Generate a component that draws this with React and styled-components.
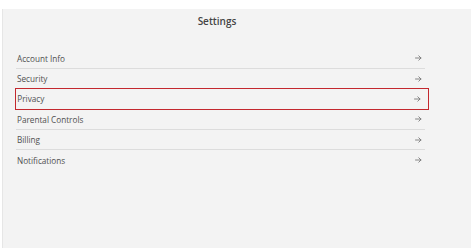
import React from 'react';
import styled, { createGlobalStyle } from 'styled-components';

const GlobalStyle = createGlobalStyle`
  html, body {
    margin: 0;
    padding: 0;
    background: #ffffff;
    font-family: "Open Sans", "Liberation Sans", sans-serif;
  }
`;

const items = [
    'Account Info',
    'Security',
    'Privacy',
    'Parental Controls',
    'Billing',
    'Notifications',
];

const Arrow = () => (
    <svg width="7" height="6" viewBox="0 0 7 6" fill="none">
        <path d="M0.5 3H6M3.8 0.8L6 3L3.8 5.2" stroke="#7a7a7a" strokeWidth="0.9" strokeLinecap="round" strokeLinejoin="round" />
    </svg>
);

const App = () => {
    return (
        <>
            <GlobalStyle />
            <Panel>
                <Content>
                    <Title>Settings</Title>
                    <List>
                        {items.map((name, i) => {
                            const active = name === 'Privacy';
                            const nextActive = items[i + 1] === 'Privacy';
                            const last = i === items.length - 1;
                            return (
                                <React.Fragment key={name}>
                                    <Row $active={active}>
                                        <Label>{name}</Label>
                                        <Arrow />
                                    </Row>
                                    {!last && !active && !nextActive && <Divider />}
                                </React.Fragment>
                            );
                        })}
                    </List>
                </Content>
            </Panel>
        </>
    );
};

export default App;

const Panel = styled.div`
    margin: 9px 3px 0 2px;
    height: 239px;
    background-color: #f3f3f3;
    border-left: 1px solid #e6e6e6;
    box-sizing: border-box;
    overflow: hidden;
`;

const Content = styled.div`
    width: 414px;
    margin-left: 12px;
    display: flex;
    flex-direction: column;
`;

const Title = styled.div`
    text-align: center;
    padding-right: 10px;
    margin-top: 5px;
    height: 14px;
    line-height: 14px;
    font-size: 10px;
    font-weight: 600;
    color: #444444;
`;

const List = styled.div`
    margin-top: 20.5px;
    display: flex;
    flex-direction: column;
`;

const Row = styled.div`
    height: ${p => (p.$active ? '21.4px' : '19.4px')};
    display: flex;
    align-items: center;
    justify-content: space-between;
    margin: ${p => (p.$active ? '0' : '0 4px 0 1px')};
    border: ${p => (p.$active ? '1.7px solid #c3282e' : 'none')};
    box-sizing: border-box;
    padding-left: ${p => (p.$active ? '1.3px' : '1px')};
    padding-right: ${p => (p.$active ? '7.3px' : '3px')};
`;

const Label = styled.span`
    font-size: 8.2px;
    color: #505050;
`;

const Divider = styled.div`
    height: 1px;
    margin: 0 4px 0 1px;
    background-color: #dcdcdc;
`;
